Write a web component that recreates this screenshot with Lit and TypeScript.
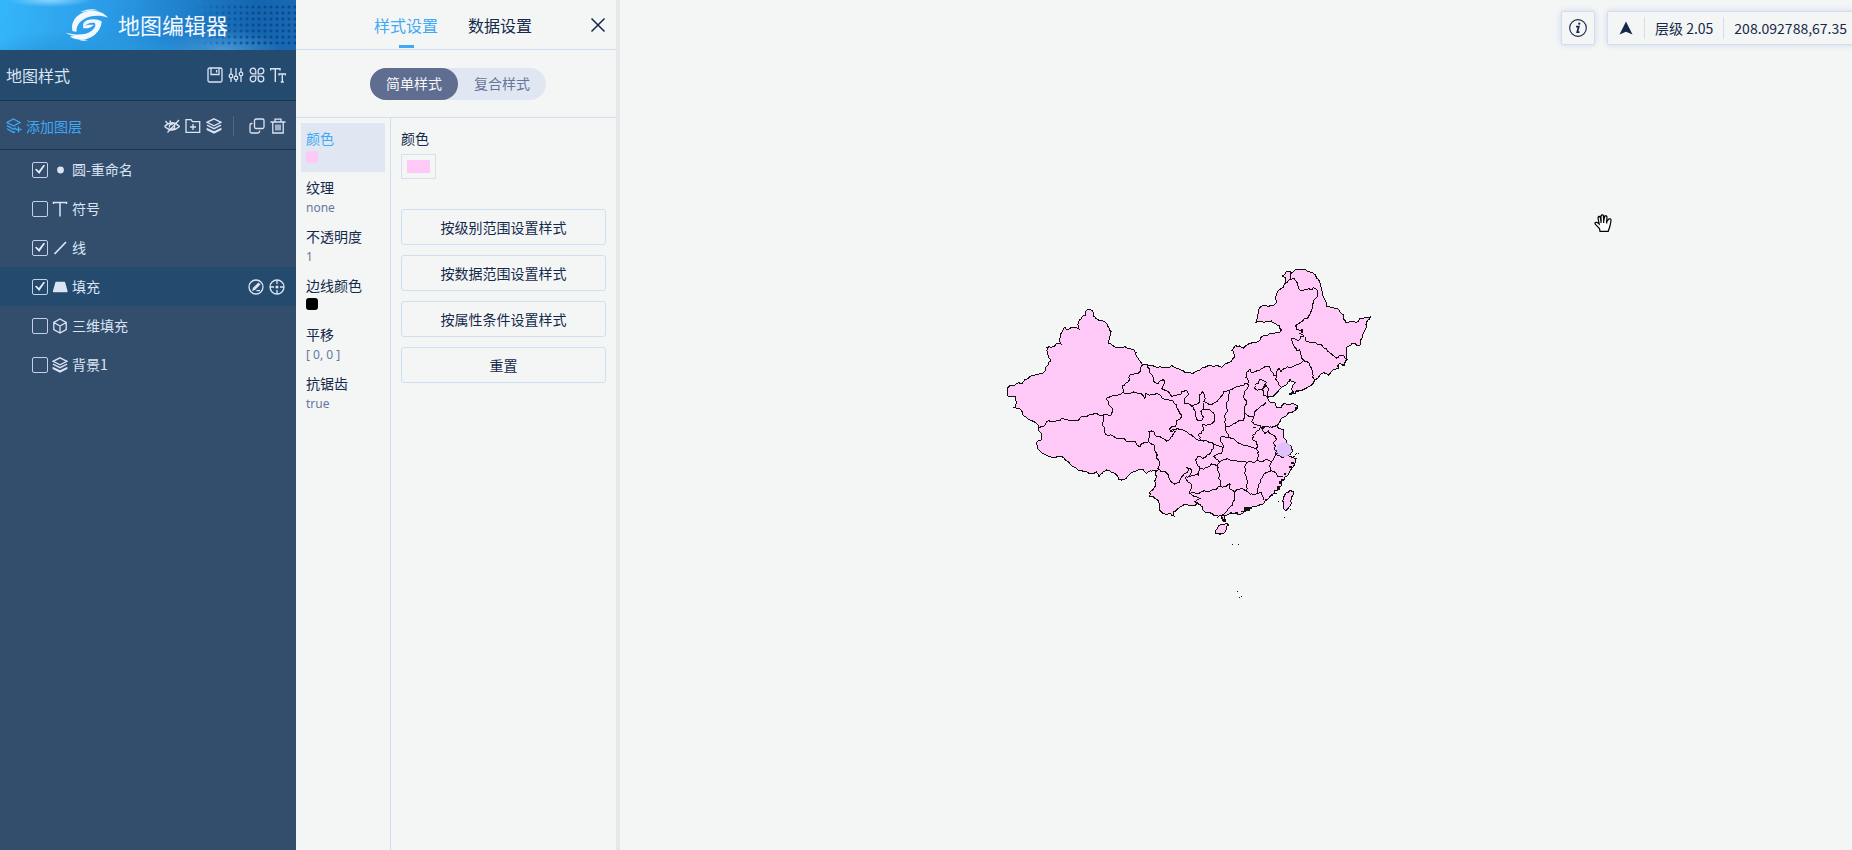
import { LitElement, html, css, svg } from "lit";
import { customElement, state } from "lit/decorators.js";
import { classMap } from "lit/directives/class-map.js";

/* ---------- map geometry ---------- */

type Point = [number, number];

const parse = (text: string, dx = 0, dy = 0): Point[] =>
  text
    .trim()
    .split(/\s+/)
    .map((pair) => {
      const [x, y] = pair.split(",").map(Number);
      return [x + dx, y + dy] as Point;
    });

/** Gives a straight-sided trace the small irregularities of a surveyed border. */
const roughen = (points: Point[], depth = 2): Point[] => {
  if (depth === 0) return points;
  const out: Point[] = [points[0]];
  for (let i = 1; i < points.length; i++) {
    const [ax, ay] = points[i - 1];
    const [bx, by] = points[i];
    const length = Math.hypot(bx - ax, by - ay);
    if (length > 7) {
      const seed = Math.sin((ax + bx) * 12.9898 + (ay + by) * 78.233) * 43758.5453;
      const shift = (seed - Math.floor(seed) - 0.5) * 0.4;
      out.push([(ax + bx) / 2 - (by - ay) * shift, (ay + by) / 2 + (bx - ax) * shift]);
    }
    out.push(points[i]);
  }
  return roughen(out, depth - 1);
};

const toPath = (points: Point[]) =>
  "M" + roughen(points).map(([x, y]) => `${x.toFixed(1)} ${y.toFixed(1)}`).join("L");

const OUTLINE = parse(`
258,152 277,152 280,165 290,177 305,182 320,190 327,205 333,215 328,235 326,250 340,258 375,260
395,268 408,278 415,295 428,315 445,315 480,320 515,316 530,325 550,332 570,338 580,340 600,330
615,322 665,322 680,310 703,292 695,270 705,257 730,265 750,250 778,243 790,228 815,220 840,217 844,210
825,190 802,183 790,187 768,187 772,170 787,137 805,140 830,127 845,85 858,68 856,52 846,48 858,35
875,38 885,30 910,28 925,35 940,40 955,58 965,85 971,110 978,138 1010,145 1030,165 1037,187 1070,187
1090,175 1112,170 1103,182 1098,205 1085,235 1077,257 1055,250 1040,262 1042,300 1033,315 1018,310
1015,325 995,335 985,347 972,338 945,360 925,380 895,390 872,403 875,385 885,368 870,358 858,375
840,388 830,398 805,410 808,425 828,430 830,443 843,443 852,430 870,433 892,438 890,447 870,457
855,470 840,485 830,497 850,508 858,540 875,560 878,575 860,585 875,592 885,595 875,625 855,650
838,685 815,705 795,722 790,732 760,740 740,750 705,760 682,765 673,770 675,785 667,780 663,765 635,760
610,752 608,740 592,728 570,738 535,745 522,753 522,768 512,760 490,760 478,748 478,732 460,710
448,710 450,695 468,678 470,650 468,635 462,630 440,640 430,630 415,630 390,643 375,657 355,657 345,640
330,633 310,635 297,650 290,635 250,635 230,625 205,605 175,590 160,593 120,573 110,550 123,540
115,505 103,485 80,473 68,458 45,442 47,410 27,410 22,395 28,378 55,368 65,372 80,358 100,347
135,333 145,315 152,300 145,262 138,262 170,250 183,252 180,235 192,203 205,208 237,207 238,180
258,165 258,152`);

const TAIWAN = parse("437,340 448,330 460,335 455,355 447,380 440,393 430,380 427,362 437,340", 420, 360);
const HAINAN = parse("228,450 240,435 265,432 258,450 240,463 226,460 228,450", 420, 360);

const WEST = [
  "118,503 130,500 145,482 180,482 185,475 215,482 250,468 290,460 310,465 320,463 333,467 337,447 325,433 318,415 345,407 367,398",
  "367,398 367,378 388,360 390,345 420,335 425,315",
  "367,398 400,395 415,400 435,415 438,400 460,405 475,402 500,418 530,435 535,450 545,470 525,500 507,507 525,515 515,530 500,543 480,530 468,528 462,515 447,515 447,545",
  "310,465 308,490 312,515 325,527 350,535 390,545 405,545 420,560 447,545",
  "447,545 462,555 470,580 475,600 475,630 462,632",
  "443,315 450,340 462,365 475,370 490,358 493,370 485,385 500,392 515,410 540,405 545,395 560,392 565,405 552,420 555,430 578,440",
].map((line) => parse(line));

const NORTHEAST = [
  "330,58 338,55 350,65 355,85 365,93 380,88 395,90 400,82 412,98 402,120 397,145 383,175 365,185 347,198 358,212 367,208 367,218 358,220 372,228",
  "318,68 330,58 335,38",
  "375,230 378,243 400,247 425,255 435,265 445,275 455,282 470,295 485,285 502,300",
  "372,228 362,230 358,240 335,236 337,245 345,262 350,272 358,270 370,300",
  "370,300 388,310 395,325 398,340 407,360",
  "370,300 350,312 330,322 303,335 297,325 292,330 290,350 280,345 268,320 255,318 240,330 215,338 210,328 200,340 198,352 205,368 195,370 180,378 150,390 130,395 110,425 90,435 80,430",
  "290,350 286,358 295,370 300,388",
  "225,375 235,370 240,358 258,365 255,380 235,390 222,384 225,375",
  "258,372 267,388 262,410 250,408 248,390 258,372",
].map((line) => parse(line, 540, 0));

const SOUTHEAST = [
  "155,78 175,70 178,45 187,35 195,45 190,65 205,72 222,70",
  "155,78 165,100 170,118 185,122 190,112 183,95 190,85 190,68",
  "190,88 215,95 223,105 222,125 187,133 190,150 175,165 182,180",
  "90,155 105,148 120,148 145,160 155,165 170,178 182,180 215,188 228,195",
  "268,30 258,70 262,95 255,115 257,138 262,160 267,172 240,172 242,185 250,200 248,212 240,222 222,230 235,240 240,247",
  "222,195 215,210 200,225 190,235 172,230 168,248 180,262",
  "228,195 245,200",
  "322,10 318,30 312,55 320,70 313,80 315,100 310,120 285,130 257,138",
  "315,100 342,108 335,125 350,135 362,138 365,145 385,140 400,140 410,135",
  "342,108 345,95 360,80 378,68",
  "362,140 358,150 348,155 338,178 350,185 350,205",
  "267,172 290,185 320,195 345,205 352,212",
  "365,140 375,160 385,152 400,165 408,180 400,190 405,210 412,220 402,235 395,242",
  "350,205 355,225 352,240 385,240 395,245 393,272",
  "405,215 420,228 440,228",
  "240,247 262,235 285,240 300,245 320,248 335,246 352,240",
  "320,248 315,275 320,290 318,315 320,335",
  "240,247 232,255 238,280 235,295 240,318",
  "240,318 255,320 270,310 268,325 285,335 305,325 320,335 335,342 355,340 365,338 372,360",
  "355,340 355,320 365,295 388,275 393,272 410,280 412,290 430,290",
  "285,335 283,360 265,385 245,405",
  "240,318 215,330 185,335 150,340 180,355 165,365 175,372",
  "150,340 155,315 140,300 138,290 148,290 175,285 180,265 200,262 215,252 232,258",
  "52,265 75,275 90,300 105,313 120,308 130,285 145,270 140,262 152,265 155,275 148,290",
].map((line) => parse(line, 420, 360));

const BORDERS = [...WEST, ...NORTHEAST, ...SOUTHEAST];

/** Offshore islands: x, y, width, height. */
const ISLANDS: [number, number, number, number][] = [
  [880, 588, 6, 4], [884, 582, 3, 3], [888, 578, 3, 3], [894, 579, 3, 3], [882, 594, 9, 3],
  [872, 605, 9, 8], [868, 618, 7, 7], [852, 640, 7, 6], [842, 656, 6, 6], [838, 664, 7, 8],
  [832, 678, 9, 11], [822, 698, 8, 4], [812, 704, 7, 4], [794, 718, 8, 6], [732, 740, 18, 12],
  [750, 742, 6, 4], [722, 752, 9, 4], [705, 757, 8, 4], [664, 765, 12, 4], [662, 772, 5, 6],
  [672, 778, 6, 8], [682, 792, 4, 5], [868, 398, 6, 8], [875, 394, 6, 5], [886, 392, 10, 3],
  [884, 440, 8, 7], [835, 722, 3, 5], [871, 748, 3, 3], [852, 772, 3, 3], [40, 440, 7, 5],
  [785, 498, 6, 5], [758, 500, 9, 5], [1026, 312, 8, 6], [652, 770, 3, 3], [697, 853, 3, 3],
  [714, 852, 3, 3], [711, 993, 3, 3], [717, 1011, 3, 3], [723, 1008, 3, 3], [902, 210, 6, 5],
];

/* ---------- icons ---------- */

const icon = (body: unknown) => html`<svg
  class="icon" viewBox="0 0 16 16" fill="none" stroke="currentColor" stroke-width="1.3"
  aria-hidden="true">${body}</svg>`;

const ICONS: Record<string, unknown> = {
  save: svg`<rect x="1" y="1" width="14" height="14" rx="1.5"/><path d="M4 1v6.5h8V1M9.6 3v2.4"/>`,
  sliders: svg`<path d="M3 1v6M3 11v4M8 1v8M8 13v2M13 1v4M13 9v6"/><circle cx="3" cy="9" r="1.8"/><circle cx="8" cy="11" r="1.8"/><circle cx="13" cy="7" r="1.8"/>`,
  command: svg`<path d="M6.8 6.8H4A2.8 2.8 0 1 1 6.8 4zM9.2 6.8V4A2.8 2.8 0 1 1 12 6.8zM6.8 9.2V12A2.8 2.8 0 1 1 4 9.2zM9.2 9.2H12A2.8 2.8 0 1 1 9.2 12z"/>`,
  font: svg`<path d="M.5 3.500V1.700H10V3.500M5.300 1.700V15M9 8.500V7H15.500V8.500M12.300 7V15M10.800 15H13.800" stroke-width="1.4"/>`,
  addLayer: svg`<path d="M7.500 1 14 4.500 7.500 8 1 4.500zM1 7.600 7.500 11.200 10 9.800M1 10.800 7.500 14.400 9 13.600M12.500 8.500V14.500M9.500 11.500H15.500"/>`,
  hidden: svg`<path d="M.5 8.500Q8 1 15.500 8.500Q8 15.500 .5 8.500M1.500 3 3.500 5.500M15 2 3.500 14.500M5.500 9.500A2.600 2.600 0 0 1 9 6.300M10.500 7.800A2.600 2.600 0 0 1 7 11M6 2.500 6.500 4.500"/>`,
  folder: svg`<path d="M1 14.300V1.700H6L7.500 3.700H14.700V14.300zM8 6V12M5 9H11"/>`,
  layers: svg`<path d="M8 .8 15 4.300 8 7.800 1 4.300z"/><path d="M1 7.200 8 10.700 15 7.200"/><path d="M.6 9.700 8 13.300 15.400 9.700V12L8 15.700 .6 12z" fill="currentColor" stroke="none"/>`,
  copy: svg`<rect x="5.500" y="1" width="9.500" height="9.500" rx="1.500"/><path d="M3.500 5.500H2.500A1.500 1.500 0 0 0 1 7V13.500A1.500 1.500 0 0 0 2.500 15H9A1.500 1.500 0 0 0 10.500 13.500V12.500"/>`,
  trash: svg`<path d="M.5 4H15.500M5 3.800V1.200H11V3.800M2.800 4V15H13.200V4M6 6.500V12.500M8 6.500V12.500M10 6.500V12.500"/>`,
  dot: svg`<circle cx="8.500" cy="8" r="3.400" fill="currentColor" stroke="none"/>`,
  text: svg`<path d="M1.500 3V1.500H14.500V3M8 1.500V15.500" stroke-width="1.500"/>`,
  line: svg`<path d="M2.500 14 14 2" stroke-width="1.800"/>`,
  fill: svg`<path d="M4 3.500H12.500L15 12.500H1.500z" fill="currentColor" stroke-linejoin="round"/>`,
  cube: svg`<path d="M8 1 14.200 4.500V11.500L8 15 1.800 11.500V4.500zM1.800 4.500 8 8 14.200 4.500M8 8V15"/>`,
  edit: svg`<circle cx="8" cy="8" r="7"/><path d="M4 12 5 8.800 10.500 3.500 12.500 5.500 7 11z" fill="currentColor" stroke="none"/><path d="M8.500 11.600H12"/>`,
  locate: svg`<circle cx="8" cy="8" r="7"/><path d="M8 1V5M8 11V15M1 8H5M11 8H15"/><circle cx="8" cy="8" r="1.600" fill="currentColor" stroke="none"/>`,
  close: svg`<path d="M1.500 1.500 14.500 14.500M14.500 1.500 1.500 14.500" stroke-width="1.500"/>`,
  info: svg`<circle cx="8" cy="8" r="7.400" stroke-width="1"/><path d="M6.300 6.700H8.700L7.300 11.700H9.300" stroke-width="1.500"/><circle cx="9.100" cy="4.200" r="1" fill="currentColor" stroke="none"/>`,
  north: svg`<path d="M8 1.500 14.500 14.500 8 11.700 1.500 14.500z" fill="currentColor" stroke="none"/>`,
};

interface Layer {
  name: string;
  icon: string;
  visible: boolean;
}

interface StyleProperty {
  name: string;
  value?: string;
  color?: "pink" | "black";
}

const PROPERTIES: StyleProperty[] = [
  { name: "颜色", color: "pink" },
  { name: "纹理", value: "none" },
  { name: "不透明度", value: "1" },
  { name: "边线颜色", color: "black" },
  { name: "平移", value: "[ 0, 0 ]" },
  { name: "抗锯齿", value: "true" },
];

const BASE = css`
  :host, * { box-sizing: border-box; }
  button { font: inherit; color: inherit; background: none; border: 0; padding: 0; margin: 0; cursor: pointer; }
  .icon { display: block; width: 16px; height: 16px; flex: none; }
`;

/* ---------- layer sidebar ---------- */

@customElement("layer-sidebar")
export class LayerSidebar extends LitElement {
  static styles = [
    BASE,
    css`
      :host { display: flex; flex-direction: column; width: 296px; flex: none; background: #324e6c; color: #dbe4f4; }
      .brand {
        position: relative; display: flex; align-items: center; justify-content: center; gap: 10px;
        height: 50px; padding-right: 2px; color: #f2f8ff; overflow: hidden;
        background:
          radial-gradient(ellipse 42px 7px at 50px 0, #8bd6ff, transparent),
          radial-gradient(ellipse 60px 22px at 222px 50px, #4598d6, transparent),
          radial-gradient(ellipse 160px 54px at 90px 74px, #2799df 40%, transparent 85%),
          linear-gradient(97deg, #35b6fa 0%, #2b9ce8 35%, #1e7cc7 65%, #1365af 85%, #1968b2 100%);
      }
      .brand::after {
        content: ""; position: absolute; inset: 4px 0 4px 196px;
        background: radial-gradient(circle, #0c4a8c 1px, transparent 2px) 0 0 / 6px 6px;
        mask-image: linear-gradient(90deg, transparent, #000 60%);
      }
      .brand h1 { margin: 0; padding-bottom: 2px; font-size: 22px; line-height: 32px; font-weight: 400; position: relative; z-index: 1; }
      .logo { width: 42px; height: 34px; }
      .bar { display: flex; align-items: center; height: 51px; padding: 0 10px 0 6px; border-bottom: 1px solid #1b3450; }
      .title { background: #244a6d; }
      .title h2 { margin: 0; font-size: 16px; line-height: 24px; font-weight: 400; }
      .tools { display: flex; align-items: center; gap: 5px; margin-left: auto; }
      .split { width: 1px; height: 20px; background: #47688a; margin: 0 10px 0 6px; }
      .add { display: flex; align-items: center; gap: 4px; color: #3fa9f5; font-size: 14px; }
      .actions { height: 49px; padding-top: 2px; }
      ul { list-style: none; margin: 0; padding: 0; }
      li { display: flex; align-items: center; height: 39px; padding: 0 11px 0 32px; gap: 4px; font-size: 14px; line-height: 20px; }
      li.active { background: #244a6d; }
      label { display: flex; align-items: center; gap: 4px; cursor: pointer; }
      label span { padding-bottom: 2px; }
      input {
        appearance: none; display: grid; place-items: center; width: 16px; height: 16px; margin: 0;
        border: 1px solid #c3d0e8; border-radius: 2px;
      }
      input:checked::before {
        content: ""; width: 10px; height: 10px; background: #e6edfa;
        clip-path: polygon(0 50%, 15% 42%, 38% 66%, 88% 0, 100% 10%, 42% 96%);
      }
    `,
  ];

  @state() private layers: Layer[] = [
    { name: "圆-重命名", icon: "dot", visible: true },
    { name: "符号", icon: "text", visible: false },
    { name: "线", icon: "line", visible: true },
    { name: "填充", icon: "fill", visible: true },
    { name: "三维填充", icon: "cube", visible: false },
    { name: "背景1", icon: "layers", visible: false },
  ];

  @state() private active = 3;

  private tool(name: string, label: string) {
    return html`<button type="button" aria-label=${label}>${icon(ICONS[name])}</button>`;
  }

  render() {
    return html`
      <header class="brand">
        <svg class="logo" viewBox="0 0 126 102" fill="#f2f8ff" aria-hidden="true">
          <path d="M20 70C10 38 40 8 78 8C102 8 116 17 126 29C100 20 70 22 50 36C36 46 30 58 32 71z"/>
          <path d="M42 13C60 3 82 2 96 7L70 8zM66 97C58 99 46 99 38 95L52 94z"/>
          <path d="M0 74C28 82 60 82 77 68C88 59 90 51 86 45C74 42 60 48 54 59C48 52 52 42 63 37C77 31 96 33 107 40C106 68 80 95 46 95C28 95 16 90 12 85L26 84C16 82 6 79 0 74z"/>
          <path d="M50 60C62 63 76 59 84 50H70C62 50 54 54 50 60z"/>
        </svg>
        <h1>地图编辑器</h1>
      </header>
      <div class="bar title">
        <h2>地图样式</h2>
        <div class="tools">
          ${this.tool("save", "保存")}${this.tool("sliders", "设置")}${this.tool("command", "图标")}${this.tool("font", "字体")}
        </div>
      </div>
      <div class="bar actions">
        <button type="button" class="add">${icon(ICONS.addLayer)}添加图层</button>
        <div class="tools">
          ${this.tool("hidden", "隐藏")}${this.tool("folder", "分组")}${this.tool("layers", "图层")}
          <span class="split"></span>
          ${this.tool("copy", "复制")}${this.tool("trash", "删除")}
        </div>
      </div>
      <ul>
        ${this.layers.map(
          (layer, i) => html`<li class=${classMap({ active: i === this.active })} @click=${() => (this.active = i)}>
            <label><input type="checkbox" .checked=${layer.visible} />${icon(ICONS[layer.icon])}<span>${layer.name}</span></label>
            ${i === this.active
              ? html`<div class="tools">${this.tool("edit", "编辑")}${this.tool("locate", "定位")}</div>`
              : ""}
          </li>`
        )}
      </ul>
    `;
  }
}

/* ---------- style panel ---------- */

@customElement("style-panel")
export class StylePanel extends LitElement {
  static styles = [
    BASE,
    css`
      :host {
        display: flex; flex-direction: column; width: 324px; flex: none; background: #f4f6f6; color: #14294a;
        border-right: 4px solid #e5e7ea; font-size: 14px; line-height: 20px;
      }
      .head { position: relative; display: flex; justify-content: center; gap: 30px; height: 50px; padding-right: 6px; border-bottom: 1px solid #cfe0ee; }
      .tab { position: relative; font-size: 16px; line-height: 24px; }
      .tab.on { color: #3fa9f5; }
      .tab.on::after { content: ""; position: absolute; left: 25px; bottom: 1px; width: 15px; height: 3px; background: #3fa9f5; }
      .close { position: absolute; right: 10px; top: 17px; }
      .mode { display: flex; justify-content: center; padding: 18px 0 17px 4px; border-bottom: 1px solid #cfe0ee; }
      .segment { display: flex; border-radius: 16px; background: #e1e7f2; color: #66769c; }
      .segment button { width: 88px; height: 32px; padding-bottom: 2px; border-radius: 16px; }
      .segment .on { background: #5e6d90; color: #f6f8fc; }
      .body { display: flex; flex: 1; }
      .list { width: 95px; padding: 5px 5px 0; border-right: 1px solid #cfe0ee; }
      .prop { display: flex; flex-direction: column; align-items: flex-start; width: 100%; height: 49px; padding: 5px 5px 0; text-align: left; }
      .prop.on { background: #e1e7f2; }
      .prop.on .name { color: #3fa9f5; }
      .value { margin-top: 2px; font-family: "Noto Sans", sans-serif; font-size: 12px; line-height: 18px; color: #66769f; }
      .chip { width: 12px; height: 12px; margin-top: 3px; border-radius: 3px; }
      .pink { background: #fec9f6; }
      .black { background: #000; }
      .editor { flex: 1; display: flex; flex-direction: column; padding: 10px 10px 0; }
      .swatch { width: 35px; height: 25px; margin: 6px 0 30px; padding: 5px; border: 1px solid #d5e1ec; }
      .swatch span { display: block; height: 13px; }
      .buttons { display: grid; gap: 10px; }
      .buttons button { height: 36px; border: 1px solid #cfe0ee; border-radius: 3px; }
    `,
  ];

  @state() private selected = 0;

  render() {
    return html`
      <div class="head">
        <button type="button" class="tab on">样式设置</button>
        <button type="button" class="tab">数据设置</button>
        <button type="button" class="close" aria-label="关闭">${icon(ICONS.close)}</button>
      </div>
      <div class="mode">
        <div class="segment">
          <button type="button" class="on">简单样式</button><button type="button">复合样式</button>
        </div>
      </div>
      <div class="body">
        <div class="list">
          ${PROPERTIES.map(
            (p, i) => html`<button type="button" class=${classMap({ prop: true, on: i === this.selected })}
              @click=${() => (this.selected = i)}>
              <span class="name">${p.name}</span>
              ${p.color ? html`<span class="chip ${p.color}"></span>` : html`<span class="value">${p.value}</span>`}
            </button>`
          )}
        </div>
        <div class="editor">
          <span>颜色</span>
          <button type="button" class="swatch" aria-label="颜色"><span class="pink"></span></button>
          <div class="buttons">
            <button type="button">按级别范围设置样式</button>
            <button type="button">按数据范围设置样式</button>
            <button type="button">按属性条件设置样式</button>
            <button type="button">重置</button>
          </div>
        </div>
      </div>
    `;
  }
}

/* ---------- map canvas ---------- */

@customElement("map-stage")
export class MapStage extends LitElement {
  static styles = [
    BASE,
    css`
      :host { display: block; position: relative; flex: 1; min-width: 0; overflow: hidden; background: #f4f6f6; color: #14294a; }
      .map { position: absolute; left: 380px; top: 260px; width: 400px; height: 350px; }
      .land { fill: #fec9f6; stroke: #111; stroke-width: 3; shape-rendering: crispEdges; }
      .border { fill: none; stroke: #111; stroke-width: 3; shape-rendering: crispEdges; }
      .island { fill: #111; shape-rendering: crispEdges; }
      .marker { fill: #dfc0ff; }
      .status { position: absolute; left: 941px; top: 11px; display: flex; gap: 12px; }
      .card { display: flex; align-items: center; height: 34px; flex: none; border: 1px solid #d3ddf0; border-radius: 2px; background: #f4f6f6; box-shadow: 0 0 6px #cfd7e8; }
      .info { width: 34px; justify-content: center; }
      .readout { padding: 0 10px; gap: 10px; font-size: 14px; line-height: 20px; white-space: nowrap; }
      .info .icon { width: 18px; height: 18px; }
      .split { width: 1px; height: 22px; background: #d3ddec; }
      .cursor { position: absolute; left: 974px; top: 214px; width: 18px; height: 18px; }
    `,
  ];

  render() {
    return html`
      <svg class="map" viewBox="0 0 1200 1050" role="img" aria-label="地图">
        ${[OUTLINE, TAIWAN, HAINAN].map((shape) => svg`<path class="land" d=${toPath(shape) + "Z"} />`)}
        ${BORDERS.map((line) => svg`<path class="border" d=${toPath(line)} />`)}
        ${ISLANDS.map(([x, y, w, h]) => svg`<rect class="island" x=${x} y=${y} width=${w} height=${h} />`)}
        <circle class="marker" cx="852" cy="569" r="22" />
      </svg>
      <div class="status">
        <button type="button" class="card info" aria-label="信息">${icon(ICONS.info)}</button>
        <div class="card readout">
          ${icon(ICONS.north)}<span class="split"></span><span>层级 2.05</span><span class="split"></span><span>208.092788,67.35</span>
        </div>
      </div>
      <svg class="cursor" viewBox="0 0 18 18" fill="#fff" stroke="#000" stroke-width="1.200" aria-hidden="true">
        <path d="M6 17.300 5.500 14.500 1 9.800 1.200 8.500 3 8.300 5.200 10 4 4 4.500 2.500 6 2.600 7 6.500 7 1.800 8 .8 9.400 1.500 9.700 6.500 10.800 2 12 1.700 13 3 12.700 7.500 15 4.800 16.700 5 17 6.500 16 12 14.200 17.300z"/>
        <path d="M7 6V9M9.700 6V9M12.700 7V9.500"/>
      </svg>
    `;
  }
}

@customElement("app-root")
export class AppRoot extends LitElement {
  static styles = css`
    :host {
      display: flex; min-height: 100vh; overflow: hidden; background: #f4f6f6;
      font-family: "Noto Sans CJK SC", "Noto Sans", sans-serif;
    }
  `;

  render() {
    return html`<layer-sidebar></layer-sidebar><style-panel></style-panel><map-stage></map-stage>`;
  }
}
